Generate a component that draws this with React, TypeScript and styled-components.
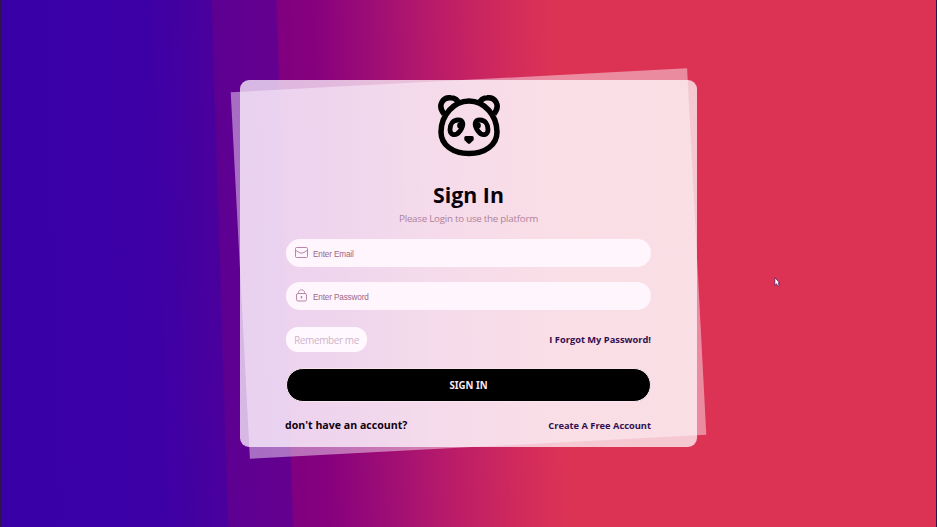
import React from "react";
import styled, { createGlobalStyle } from "styled-components";

const GlobalStyle = createGlobalStyle`
  * { box-sizing: border-box; }
  body { margin: 0; font-family: "Open Sans", "Noto Sans", sans-serif; }
`;

const Page = styled.main`
  position: relative;
  display: flex;
  justify-content: center;
  height: 527px;
  padding-top: 80px;
  overflow: hidden;
  border: solid #30124a;
  border-width: 0 1px;
  background: linear-gradient(
    88.2deg,
    #3900a8 0, #3c00a6 155px, #4a009d 226px,
    #5d0092 228px, #640090 291px,
    #800080 293px, #86007e 328px, #a10f74 395px,
    #bd1d67 458px, #d02a5c 517px, #dc3355 568px, #dc3355 100%
  );
`;

const Card = styled.section`
  position: relative;
  width: 457px;
  height: 367px;
  padding: 15px 46px 0;
  display: flex;
  flex-direction: column;
  align-items: center;
  border-radius: 9px;
  background: linear-gradient(
    90deg,
    rgba(255, 244, 255, 0.75) 0%,
    rgba(255, 250, 255, 0.75) 40%,
    rgba(255, 255, 255, 0.73) 100%
  );

  &::before {
    content: "";
    position: absolute;
    inset: 0;
    z-index: 0;
    background: linear-gradient(
      90deg,
      rgba(255, 242, 255, 0.45) 0%,
      rgba(255, 249, 255, 0.46) 40%,
      rgba(255, 251, 255, 0.44) 100%
    );
    transform: rotate(-3deg);
  }

  > * { position: relative; }
`;

const PandaLogo = styled.svg`
  flex: none;
  width: 62px;
  height: 62px;
`;

const Title = styled.h1`
  margin: 23px 0 0;
  font-size: 21.3px;
  line-height: 30px;
  font-weight: 700;
  white-space: nowrap;
  color: #07000a;
`;

const Subtitle = styled.p`
  margin: 1px 0 0;
  font-size: 9.8px;
  line-height: 15px;
  letter-spacing: -0.26px;
  white-space: nowrap;
  color: #ae829c;
`;

const Field = styled.label<{ $gap: number }>`
  width: 100%;
  height: 28px;
  flex: none;
  margin-top: ${(p) => p.$gap}px;
  padding: 0 9px;
  display: flex;
  align-items: center;
  gap: 5px;
  border-radius: 14px;
  background: #fff5fd;

  svg { width: 13px; height: 13px; flex: none; margin-top: -2px; }
`;

const Input = styled.input`
  flex: 1;
  min-width: 0;
  padding: 2px 0 0;
  border: 0;
  outline: 0;
  background: transparent;
  font: 8.2px "Liberation Sans", sans-serif;
  letter-spacing: -0.15px;

  &::placeholder { color: #9c6688; opacity: 1; }
`;

const Row = styled.div<{ $gap: number; $height: number }>`
  width: 100%;
  flex: none;
  height: ${(p) => p.$height}px;
  margin-top: ${(p) => p.$gap}px;
  display: flex;
  align-items: center;
  justify-content: space-between;
`;

const Remember = styled.button`
  width: 81px;
  height: 25px;
  padding: 1px 0 0;
  border: 0;
  border-radius: 12px;
  background: #fff8fe;
  color: #cdb5cb;
  font: 10px "Open Sans", sans-serif;
  letter-spacing: -0.4px;
  white-space: nowrap;
`;

const TextLink = styled.a`
  font-size: 9.3px;
  font-weight: 700;
  white-space: nowrap;
  color: #32104f;
`;

const Question = styled.span`
  margin-left: -1px;
  font-size: 10.6px;
  font-weight: 700;
  white-space: nowrap;
  color: #10000f;
`;

const Submit = styled.button`
  width: 100%;
  height: 34px;
  flex: none;
  margin-top: 16px;
  padding: 1px 0 0;
  border: 1px solid #f9e5f0;
  border-radius: 17px;
  background: #000;
  color: #f7e9f5;
  font: 700 9.7px "Noto Sans", sans-serif;
`;

const Cursor = styled.svg`
  position: absolute;
  left: 773px;
  top: 276px;
  width: 6px;
  height: 12px;
`;

const Panda = () => (
  <PandaLogo viewBox="0 0 62 62" fill="none" stroke="#000" strokeWidth="5.500" aria-label="Panda">
    <path d="M6 19C-1 10 5 2 13 2.750C18 3 20 6 21 9M56 19C63 10 57 2 49 2.750C44 3 42 6 41 9" />
    <path d="M31 6C16 6 3 20 3 37C3 50 15 58.500 31 58.500S59 50 59 37C59 20 46 6 31 6Z" />
    <path d="M20 25C25.500 25 26.500 30 22 36C17.500 42 12 40 12 34.500C12 29 15 25 20 25ZM42 25C36.500 25 35.500 30 40 36C44.500 42 50 40 50 34.500C50 29 47 25 42 25Z" strokeWidth="4.800" />
    <circle cx="22.500" cy="30.500" r="3.300" fill="#000" stroke="none" />
    <circle cx="39.500" cy="30.500" r="3.300" fill="#000" stroke="none" />
    <path d="M27.800 42.500H34.200V44.500L31 47.500L27.800 44.500Z" fill="#000" strokeWidth="3" strokeLinejoin="round" />
  </PandaLogo>
);

const Mail = () => (
  <svg viewBox="0 0 13 13" fill="none" stroke="#b884a8" strokeWidth="1">
    <rect x=".5" y="1.500" width="12" height="10" rx="1" />
    <path d="M1 4.500L5 7H8L12 4.500" />
  </svg>
);

const Lock = () => (
  <svg viewBox="0 0 13 13" fill="none" stroke="#b884a8" strokeWidth="1">
    <rect x="1.500" y="4.500" width="10" height="7.500" rx="1.500" />
    <path d="M3.500 4.500V3.500C3.500 0 9.500 0 9.500 3.500V4.500M6.500 7V9.500M5.500 8H7.500" />
  </svg>
);

export default function App() {
  return (
    <>
      <GlobalStyle />
      <Page>
        <Card>
          <Panda />
          <Title>Sign In</Title>
          <Subtitle>Please Login to use the platform</Subtitle>
          <Field $gap={13}>
            <Mail />
            <Input type="email" placeholder="Enter Email" />
          </Field>
          <Field $gap={15}>
            <Lock />
            <Input type="password" placeholder="Enter Password" />
          </Field>
          <Row $gap={17} $height={25}>
            <Remember>Remember me</Remember>
            <TextLink>I Forgot My Password!</TextLink>
          </Row>
          <Submit>SIGN IN</Submit>
          <Row $gap={15} $height={16}>
            <Question>don't have an account?</Question>
            <TextLink>Create A Free Account</TextLink>
          </Row>
        </Card>
        <Cursor viewBox="0 0 7 12">
          <path d="M1 1V10L3 8L4.500 11L6 10L5 7H6.500Z" fill="#fff" stroke="#3d1557" strokeWidth=".8" />
        </Cursor>
      </Page>
    </>
  );
}
